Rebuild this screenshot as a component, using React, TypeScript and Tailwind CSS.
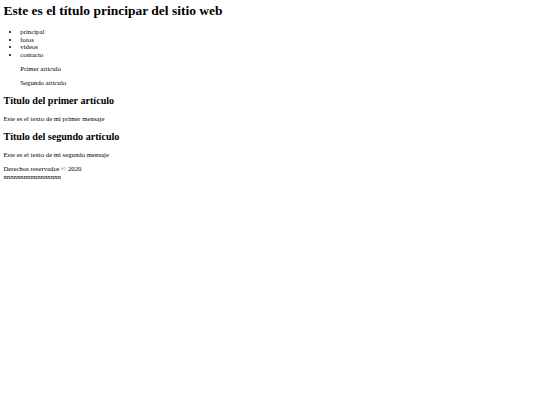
import React from 'react';

export default function App() {
  const links = ['principal', 'fotos', 'videos', 'contacto'];

  return (
    <div className="min-h-screen bg-white text-black font-['Liberation_Serif',serif] text-[6.75px] leading-[7.6px] px-[3.4px] pt-[3.4px]">
      {/* Cabecera */}
      <header>
        <h1 className="text-[13.5px] font-bold leading-[15.6px] mb-[9px]">Este es el título principar del sitio web</h1>
        <nav>
          <ul className="list-disc pl-[16.9px] mb-[6.75px]">
            {links.map((l) => (
              <li key={l}>{l}</li>
            ))}
          </ul>
        </nav>
      </header>

      {/* Enlaces a artículos */}
      <div className="pl-[16.9px]">
        <p className="my-[6.75px]">Primer artículo</p>
        <p className="my-[6.75px]">Segundo artículo</p>
      </div>

      <section>
        <article>
          <h2 className="text-[10.125px] font-bold leading-[11.4px] my-[8.4px]">Título del primer artículo</h2>
          <p className="my-[6.75px]">Este es el texto de mi primer mensaje</p>
        </article>
        <article>
          <h2 className="text-[10.125px] font-bold leading-[11.4px] my-[8.4px]">Título del segundo artículo</h2>
          <p className="my-[6.75px]">Este es el texto de mi segundo mensaje</p>
        </article>
      </section>

      <footer>
        <p className="mt-[6.75px]">Derechos reservados © 2020</p>
        <p>nnnnnnnnnnnnnnnnn</p>
      </footer>
    </div>
  );
}
